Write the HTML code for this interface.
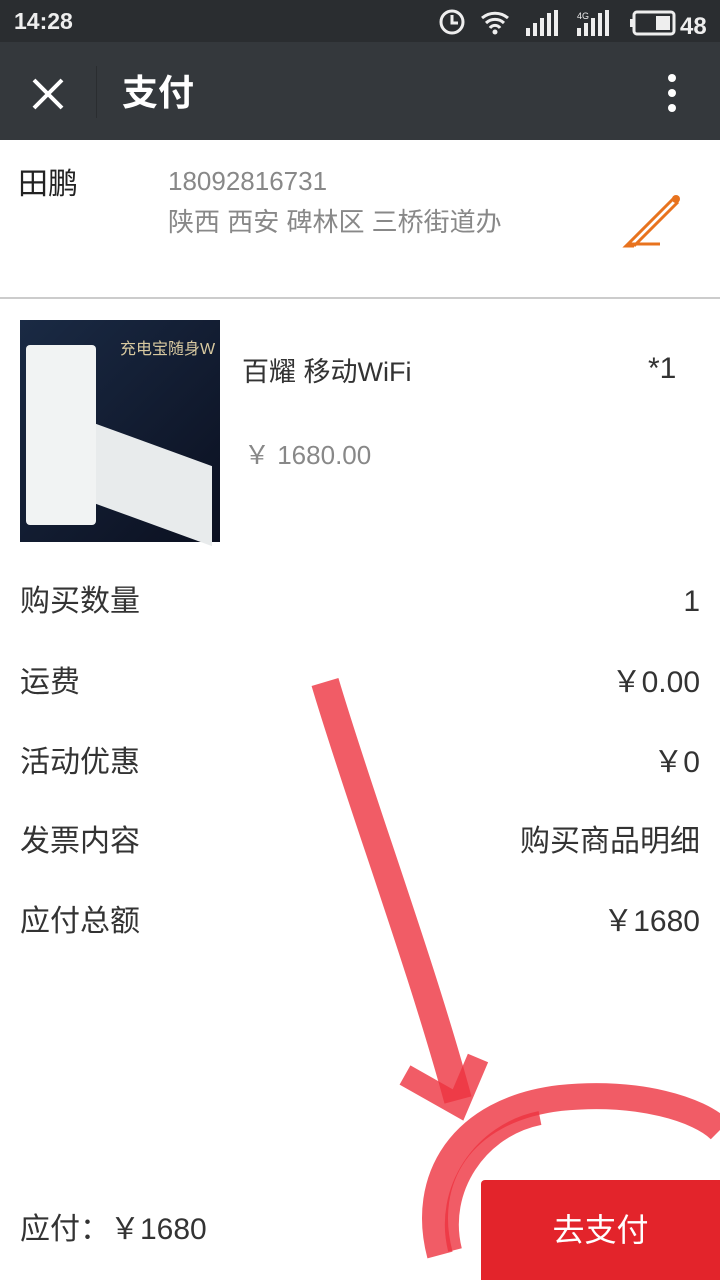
<!DOCTYPE html>
<html><head><meta charset="utf-8"><style>
body{margin:0;width:720px;height:1280px;position:relative;background:#fff;font-family:"Liberation Sans","Noto Sans CJK SC",sans-serif;overflow:hidden}
.a{position:absolute;white-space:nowrap;line-height:1}
.row{position:absolute;left:20px;right:20px;font-size:30px;color:#333;line-height:30px;height:30px}
.row span{position:absolute;right:0;top:0}
</style></head><body>
<div class="a" style="left:0;top:0;width:720px;height:42px;background:#2a2d30"></div>
<div class="a" style="left:14px;top:10px;color:#eee;font-size:23px;font-weight:bold">14:28</div>
<svg class="a" style="left:436px;top:4px" width="284" height="36" viewBox="0 0 284 36">
<circle cx="16" cy="18" r="11" fill="none" stroke="#eee" stroke-width="3"/><path d="M16 11v8h6" stroke="#eee" stroke-width="3" fill="none"/>
<path d="M46 14a20 20 0 0 1 26 0M50 19a13 13 0 0 1 18 0M54 24a6 6 0 0 1 10 0" stroke="#eee" stroke-width="3" fill="none"/><circle cx="59" cy="28" r="2.5" fill="#eee"/>
<g fill="#eee"><rect x="90" y="24" width="4" height="8"/><rect x="97" y="19" width="4" height="13"/><rect x="104" y="14" width="4" height="18"/><rect x="111" y="9" width="4" height="23"/><rect x="118" y="6" width="4" height="26"/>
<rect x="141" y="24" width="4" height="8"/><rect x="148" y="19" width="4" height="13"/><rect x="155" y="14" width="4" height="18"/><rect x="162" y="9" width="4" height="23"/><rect x="169" y="6" width="4" height="26"/></g>
<text x="141" y="15" font-size="9" fill="#eee" font-family="Liberation Sans">4G</text>
<rect x="198" y="8" width="40" height="22" rx="3" fill="none" stroke="#eee" stroke-width="3"/><rect x="194" y="15" width="4" height="8" fill="#eee"/><rect x="220" y="12" width="14" height="14" fill="#eee"/>
<text x="244" y="30" font-size="24" font-weight="bold" fill="#eee" font-family="Liberation Sans">48</text>
</svg>
<div class="a" style="left:0;top:42px;width:720px;height:98px;background:#34383c"></div>
<svg class="a" style="left:30px;top:76px" width="36" height="36"><path d="M4 4L32 32M32 4L4 32" stroke="#fff" stroke-width="4"/></svg>
<div class="a" style="left:96px;top:66px;width:1px;height:52px;background:#2a2d30"></div>
<div class="a" style="left:122px;top:75px;color:#fff;font-size:36px;font-weight:bold">支付</div>
<svg class="a" style="left:660px;top:70px" width="24" height="46"><circle cx="12" cy="8" r="4" fill="#fff"/><circle cx="12" cy="23" r="4" fill="#fff"/><circle cx="12" cy="38" r="4" fill="#fff"/></svg>
<div class="a" style="left:18px;top:170px;font-size:30px;color:#222">田鹏</div>
<div class="a" style="left:168px;top:168px;font-size:26px;color:#888">18092816731</div>
<div class="a" style="left:168px;top:209px;font-size:26px;color:#888">陕西 西安 碑林区 三桥街道办</div>
<svg class="a" style="left:620px;top:188px" width="64" height="64"><path d="M8 56L54 10M14 58L58 14M8 56l-2 2 8 0M8 56h32" stroke="#e8731e" stroke-width="3" fill="none"/><circle cx="56" cy="11" r="4" fill="#e8731e"/></svg>
<div class="a" style="left:0;top:297px;width:720px;height:2px;background:#ccc"></div>
<div class="a" style="left:20px;top:320px;width:200px;height:222px;background:linear-gradient(135deg,#1a2a44,#0b1020)"></div>
<div class="a" style="left:26px;top:345px;width:70px;height:180px;background:#f1f3f3;border-radius:4px"></div>
<div class="a" style="left:96px;top:445px;width:116px;height:80px;background:#e8ebec;transform:skewY(20deg)"></div>
<div class="a" style="left:120px;top:342px;font-size:16px;color:#d8c9a0">充电宝随身W</div>
<div class="a" style="left:242px;top:359px;font-size:27px;color:#333">百耀 移动WiFi</div>
<div class="a" style="left:648px;top:354px;font-size:30px;color:#333">*1</div>
<div class="a" style="left:244px;top:442px;font-size:26px;color:#888">￥ 1680.00</div>
<div class="row" style="top:587px">购买数量<span>1</span></div>
<div class="row" style="top:668px">运费<span>￥0.00</span></div>
<div class="row" style="top:748px">活动优惠<span>￥0</span></div>
<div class="row" style="top:827px">发票内容<span>购买商品明细</span></div>
<div class="row" style="top:907px">应付总额<span>￥1680</span></div>
<div class="a" style="left:20px;top:1215px;font-size:30px;color:#333">应付：￥1680</div>
<div class="a" style="left:481px;top:1180px;width:239px;height:100px;background:#e3242b;color:#fff;font-size:32px;text-align:center;line-height:100px;border-radius:4px 0 0 0">去支付</div>
<svg class="a" style="left:0;top:0" width="720" height="1280">
<g stroke="#ee3340" stroke-opacity="0.8" fill="none" stroke-linecap="butt">
<path d="M325 682C360 800 420 960 458 1100" stroke-width="28"/>
<path d="M405 1075L458 1105L478 1058" stroke-width="22"/>
<path d="M440 1255C420 1180 460 1110 560 1098C640 1090 700 1110 720 1130" stroke-width="26"/>
<path d="M455 1250C440 1190 480 1130 540 1118" stroke-width="14"/>
</g></svg>
</body></html>
